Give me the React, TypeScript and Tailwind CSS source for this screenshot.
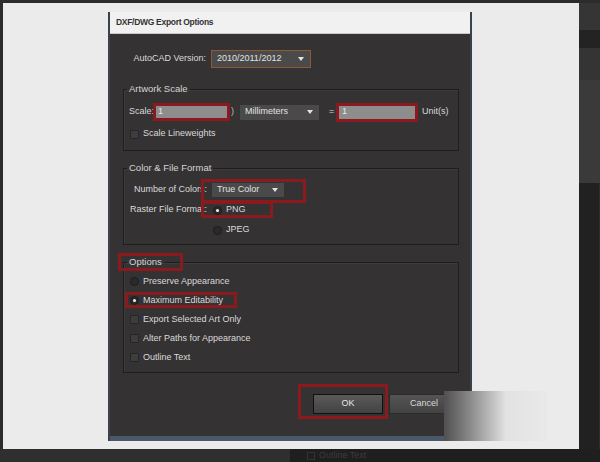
import React from "react";

const font = { fontFamily: '"Liberation Sans", Arial, sans-serif' };

function Arrow() {
  return (
    <svg width="6" height="4" viewBox="0 0 6 4" className="shrink-0">
      <path d="M0 0 L6 0 L3 4 Z" fill="#e4e4e4" />
    </svg>
  );
}

function Select({ label, className }: { label: string; className: string }) {
  return (
    <div className={`flex items-center justify-between bg-[#4a4a4a] pl-[5px] pr-[6px] text-[#e2e2e2] ${className}`}>
      <span>{label}</span>
      <Arrow />
    </div>
  );
}

function Radio({ on }: { on?: boolean }) {
  return (
    <span className="flex h-[9px] w-[9px] shrink-0 items-center justify-center rounded-full border border-[#1d1d1d] bg-[#2b2a2a]">
      {on && <span className="h-[3px] w-[3px] rounded-full bg-[#f2f2f2]" />}
    </span>
  );
}

function Check() {
  return <span className="h-[9px] w-[9px] shrink-0 rounded-[1px] border border-[#262626] bg-[#3e3d3d]" />;
}

// red annotation frame drawn over a control
function Mark({ className }: { className: string }) {
  return <span className={`pointer-events-none absolute border-[3px] border-[#8a1a1e] ${className}`} />;
}

function Group({ title, children, className, mark }: { title: string; children: React.ReactNode; className: string; mark?: boolean }) {
  return (
    <fieldset className={`border border-[#1f1e1e] shadow-[inset_1px_1px_0_#3d3b3c] ${className}`}>
      <legend className="relative ml-[3px] px-[2px] text-[9.5px] leading-[12px] text-[#d4d4d4]">
        {title}
        {mark && <Mark className="-left-[9px] -top-[3px] h-[18px] w-[65px]" />}
      </legend>
      {children}
    </fieldset>
  );
}

export default function App() {
  return (
    <div className="flex h-[462px] w-[600px] flex-col overflow-hidden bg-[#2c2c2c] text-[9px]" style={font}>
      <div className="flex h-[449px] pt-[3px]">
        <div className="w-[3px]" />
        <div className="relative w-[576px] bg-[#ebebeb] pl-[105px] pt-[9px]">
          {/* dialog */}
          <div className="flex h-[429px] w-[364px] flex-col border-l-2 border-r-2 border-[#3c424b]">
            <div className="flex h-[22px] items-center border-b border-[#c9c9c9] bg-[#f1f1f1] pl-[6px] text-[8.5px] font-bold tracking-[-0.3px] text-[#333]">
              DXF/DWG Export Options
            </div>
            <div className="flex flex-1 flex-col border-b-[5px] border-[#4b586a] bg-[#343233] pl-[13px] pr-[11px] text-[#dadada]">
              {/* version */}
              <div className="mt-[16px] flex h-[18px] items-center">
                <span className="w-[84px] pr-[1px] text-right">AutoCAD Version:</span>
                <Select label="2010/2011/2012" className="ml-[4px] h-[18px] w-[100px] border border-[#8f5a2e]" />
              </div>

              <Group title="Artwork Scale" className="mt-[15px] pb-[9px] pt-[8px]">
                <div className="flex h-[18px] items-center pl-[5px]">
                  <span className="w-[24px]">Scale:</span>
                  <div className="relative flex h-[18px] w-[77px] items-center">
                    <div className="mx-[2px] flex h-[14px] flex-1 items-center bg-[#8e8d8d] pl-[3px] text-[#e8e8e8]">1</div>
                    <Mark className="inset-0" />
                  </div>
                  <span className="ml-[1px] text-[#bbb]">)</span>
                  <Select label="Millimeters" className="ml-[6px] h-[15px] w-[79px]" />
                  <span className="ml-[10px] w-[6px]">=</span>
                  <div className="relative ml-[1px] flex h-[19px] w-[82px] items-center">
                    <div className="mx-[3px] flex h-[14px] flex-1 items-center bg-[#8e8d8d] pl-[3px] text-[#e8e8e8]">1</div>
                    <Mark className="inset-0" />
                  </div>
                  <span className="ml-[4px]">Unit(s)</span>
                </div>
                <div className="mt-[6px] flex h-[14px] items-center gap-[4px] pl-[6px]">
                  <Check />
                  <span>Scale Lineweights</span>
                </div>
              </Group>

              <Group title="Color &amp; File Format" className="mt-[11px] pb-[4px] pt-[6px]">
                <div className="grid grid-cols-[83px_1fr] gap-x-[5px]">
                  <span className="flex h-[20px] items-center justify-end">Number of Colors:</span>
                  <div className="relative flex h-[20px] items-center">
                    <Select label="True Color" className="h-[14px] w-[72px]" />
                    <Mark className="-left-[11px] -top-[1px] h-[24px] w-[105px]" />
                  </div>
                  <span className="flex h-[20px] items-center justify-end">Raster File Format:</span>
                  <div className="relative flex h-[20px] items-center gap-[4px] pl-[1px]">
                    <Radio on />
                    <span>PNG</span>
                    <Mark className="-left-[11px] top-[1px] h-[17px] w-[72px]" />
                  </div>
                  <span />
                  <div className="flex h-[20px] items-center gap-[4px] pl-[1px]">
                    <Radio />
                    <span>JPEG</span>
                  </div>
                </div>
              </Group>

              <Group title="Options" mark className="mt-[11px] pb-[5px] pt-[4px]">
                <div className="px-[6px]">
                  <div className="flex h-[19px] items-center gap-[4px]">
                    <Radio />
                    <span>Preserve Appearance</span>
                  </div>
                  <div className="relative flex h-[19px] items-center gap-[4px]">
                    <Radio on />
                    <span>Maximum Editability</span>
                    <Mark className="-left-[5px] top-[1px] h-[16px] w-[112px]" />
                  </div>
                  {["Export Selected Art Only", "Alter Paths for Appearance", "Outline Text"].map((t) => (
                    <div key={t} className="flex h-[19px] items-center gap-[4px]">
                      <Check />
                      <span>{t}</span>
                    </div>
                  ))}
                </div>
              </Group>

              <div className="mt-[21px] flex justify-end gap-[6px]">
                <div className="relative flex h-[20px] w-[70px] items-center justify-center border border-[#111] bg-gradient-to-b from-[#5b5a5a] to-[#434242] text-[#e6e6e6]">
                  OK
                  <Mark className="-bottom-[6px] -left-[16px] -right-[6px] -top-[11px]" />
                </div>
                <div className="flex h-[20px] w-[70px] items-center justify-center border border-[#2c2b2b] bg-gradient-to-b from-[#555454] to-[#444343] text-[#d8d8d8]">
                  Cancel
                </div>
              </div>
            </div>
          </div>
          {/* faded watermark patch */}
          <div className="absolute left-[441px] top-[388px] h-[50px] w-[103px] bg-gradient-to-r from-[#505050] via-[#e2e2e2] via-60% to-[#e9e9e9]" />
        </div>
        <div className="flex flex-1 flex-col">
          <div className="h-[27px] bg-[#353535]" />
          <div className="h-[18px] bg-[#232323]" />
          <div className="h-[32px] bg-[#343434]" />
          <div className="h-[103px] bg-[#3a3a3a]" />
          <div className="flex-1 border-r border-[#2c2c2c] bg-[#212121]" />
        </div>
      </div>
      <div className="flex h-[13px]">
        <div className="w-[290px] bg-[#2f2f2f]" />
        <div className="flex flex-1 items-center gap-[4px] bg-[#1f1f1f] pl-[17px] text-[#3c3c3c]">
          <span className="h-[8px] w-[8px] border border-[#333]" />
          <span>Outline Text</span>
        </div>
      </div>
    </div>
  );
}
